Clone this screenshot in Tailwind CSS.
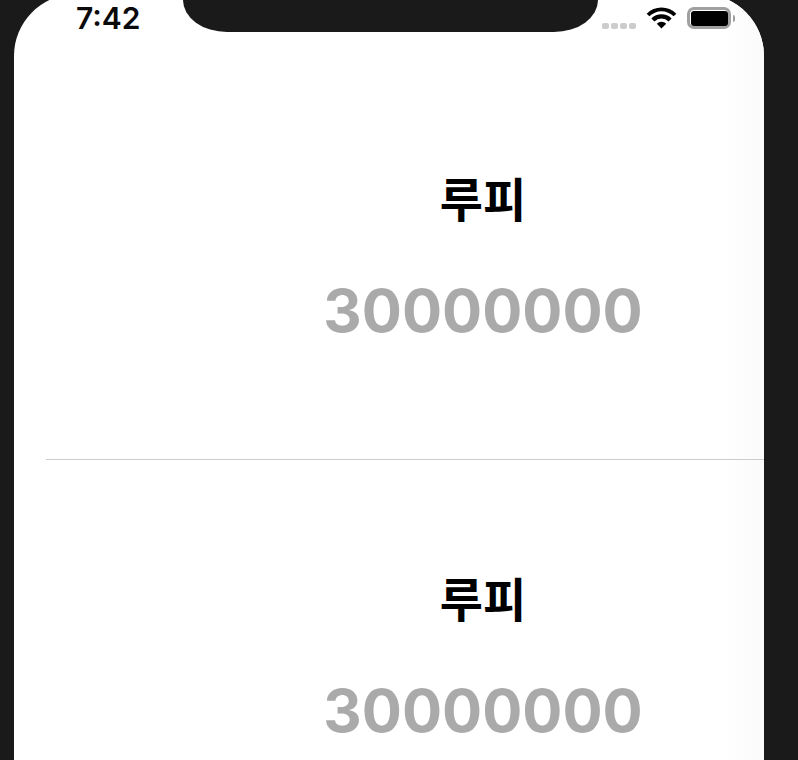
<!DOCTYPE html>
<html><head><meta charset="utf-8"><script src="https://cdn.jsdelivr.net/npm/@tailwindcss/browser@4"></script></head>
<body class="m-0 h-[760px] w-[798px] overflow-hidden bg-[#1a1a1a] font-['Inter','Noto_Sans_CJK_KR',sans-serif]">
<div class="relative ml-[14px] mt-[-6px] h-[900px] w-[750px] overflow-hidden rounded-t-[62px] bg-white">
  <div class="absolute right-0 top-0 h-full w-[40px] bg-gradient-to-r from-white to-[#fafafa]"></div>
  <div class="absolute left-[169px] top-[6px] h-[32px] w-[415px] rounded-b-[44px_32px] bg-[#1a1a1a]"></div>
  <div class="relative flex h-[66px] items-start justify-between pl-[62px] pr-[29px] pt-[6px]">
    <span class="text-[30px] font-semibold leading-[36px] text-[#0a0a0a]">7:42</span>
    <div class="flex items-end gap-[10px] pt-[7px]">
      <div class="flex gap-[2px]">
        <span class="h-[6px] w-[7px] rounded-[2px] bg-[#ccc]"></span><span class="h-[6px] w-[7px] rounded-[2px] bg-[#ccc]"></span><span class="h-[6px] w-[7px] rounded-[2px] bg-[#ccc]"></span><span class="h-[6px] w-[7px] rounded-[2px] bg-[#ccc]"></span>
      </div>
      <svg class="block" width="31" height="22" viewBox="0 0 31 23"><path d="M0 6.94A22 22 0 0 1 31 6.94L28.2 9.8A18 18 0 0 0 2.8 9.8Z M4.9 11.9A15 15 0 0 1 26.1 11.9L22.9 15.1A10.5 10.5 0 0 0 8.1 15.1Z M10.55 17.55A7 7 0 0 1 20.45 17.55L15.5 22.5Z" fill="#000"/></svg>
      <div class="flex items-center">
        <div class="h-[22px] w-[44px] rounded-[7px] border-[3px] border-[#a0a0a0] p-[0.5px]"><div class="h-full w-full rounded-[3px] bg-black"></div></div>
        <div class="ml-[2px] h-[7px] w-[2px] rounded-r-full bg-[#a0a0a0]"></div>
      </div>
    </div>
  </div>
  <div class="relative ml-[32px]">
    <div class="flex h-[400px] border-b border-[#ccc]">
      <div class="w-[156px]"></div>
      <div class="flex flex-1 flex-col items-center pt-[112px]">
        <div class="text-[47px] font-bold leading-[56px] text-black">루피</div>
        <div class="mt-[46px] text-[59.5px] font-bold leading-[72px] text-[#aaa]">30000000</div>
      </div>
    </div>
    <div class="flex h-[400px]">
      <div class="w-[156px]"></div>
      <div class="flex flex-1 flex-col items-center pt-[112px]">
        <div class="text-[47px] font-bold leading-[56px] text-black">루피</div>
        <div class="mt-[46px] text-[59.5px] font-bold leading-[72px] text-[#aaa]">30000000</div>
      </div>
    </div>
  </div>
</div>
</body></html>
